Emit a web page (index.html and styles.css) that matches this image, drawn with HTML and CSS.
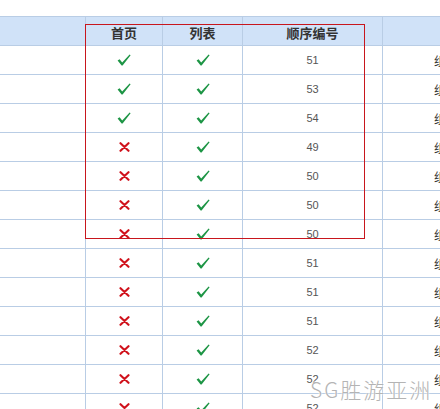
FILE: index.html
```html
<!DOCTYPE html>
<html lang="zh">
<head>
<meta charset="utf-8">
<link rel="stylesheet" href="styles.css">
</head>
<body>
<div class="page">
  <div class="grid">
    <div class="cell head"></div>
    <div class="cell head">首页</div>
    <div class="cell head">列表</div>
    <div class="cell head">顺序编号</div>
    <div class="cell head"></div>
  </div>
  <div class="grid" id="rows"></div>
  <div class="highlight"></div>
  <div class="watermark">SG胜游亚洲</div>
</div>
<script>
var data=[[1,1,51],[1,1,53],[1,1,54],[0,1,49],[0,1,50],[0,1,50],[0,1,50],[0,1,51],[0,1,51],[0,1,51],[0,1,52],[0,1,52],[0,1,52]];
var ok='<svg class="ico" width="14" height="12" viewBox="0 0 14 12"><path d="M0.6 6.4 L2.6 5.2 L5.2 8.4 L12.6 0.4 L13.6 1.2 L5.6 11.6 L4.6 11.6 Z" fill="#1d9545"/></svg>';
var no='<svg class="ico" width="11" height="10" viewBox="0 0 11 10"><path d="M1.5 1.2 L9.5 8.8 M9.5 1.2 L1.5 8.8" stroke="#d0121c" stroke-width="2.1" stroke-linecap="round"/></svg>';
var h='';
data.forEach(function(r){
  h+='<div class="cell"></div><div class="cell c">'+(r[0]?ok:no)+'</div><div class="cell c">'+(r[1]?ok:no)+'</div><div class="cell c num">'+r[2]+'</div><div class="cell last">组</div>';
});
document.getElementById('rows').innerHTML=h;
</script>
</body>
</html>
```
FILE: styles.css
```css
html, body {
  margin: 0;
  padding: 0;
  background: #fff;
  overflow: hidden;
}
.page {
  position: relative;
  width: 440px;
  height: 409px;
  overflow: hidden;
  padding-top: 16px;
  box-sizing: border-box;
  font-family: "Liberation Sans", "Noto Sans CJK SC", sans-serif;
}
.grid {
  display: grid;
  grid-template-columns: 86px 77px 80px 140px 200px;
  width: 583px;
}
.grid:first-child {
  border-top: 1px solid #b9cde5;
}
.cell {
  box-sizing: border-box;
  height: 29px;
  border-right: 1px solid #b9cde5;
  border-bottom: 1px solid #b9cde5;
  display: flex;
  align-items: center;
}
.head {
  background: #d0e2f8;
  justify-content: center;
  font-family: "Noto Sans CJK SC", sans-serif;
  font-weight: bold;
  font-size: 13px;
  color: #333;
  padding-top: 2px;
}
.c {
  justify-content: center;
}
.num {
  font-size: 11px;
  color: #555;
}
.last {
  padding-left: 51px;
  font-family: "Noto Sans CJK SC", sans-serif;
  font-size: 12px;
  color: #333;
}
.ico {
  display: block;
}
.highlight {
  position: absolute;
  left: 85px;
  top: 24px;
  width: 280px;
  height: 215px;
  box-sizing: border-box;
  border: 1px solid #c8161d;
}
.watermark {
  position: absolute;
  left: 310px;
  top: 376px;
  font-family: "Noto Sans CJK SC", sans-serif;
  font-weight: 300;
  font-size: 21px;
  line-height: 26px;
  letter-spacing: 2px;
  color: #b4b4b4;
  text-shadow: 0 0 2px #fff, 0 0 2px #fff;
  white-space: nowrap;
}
```
